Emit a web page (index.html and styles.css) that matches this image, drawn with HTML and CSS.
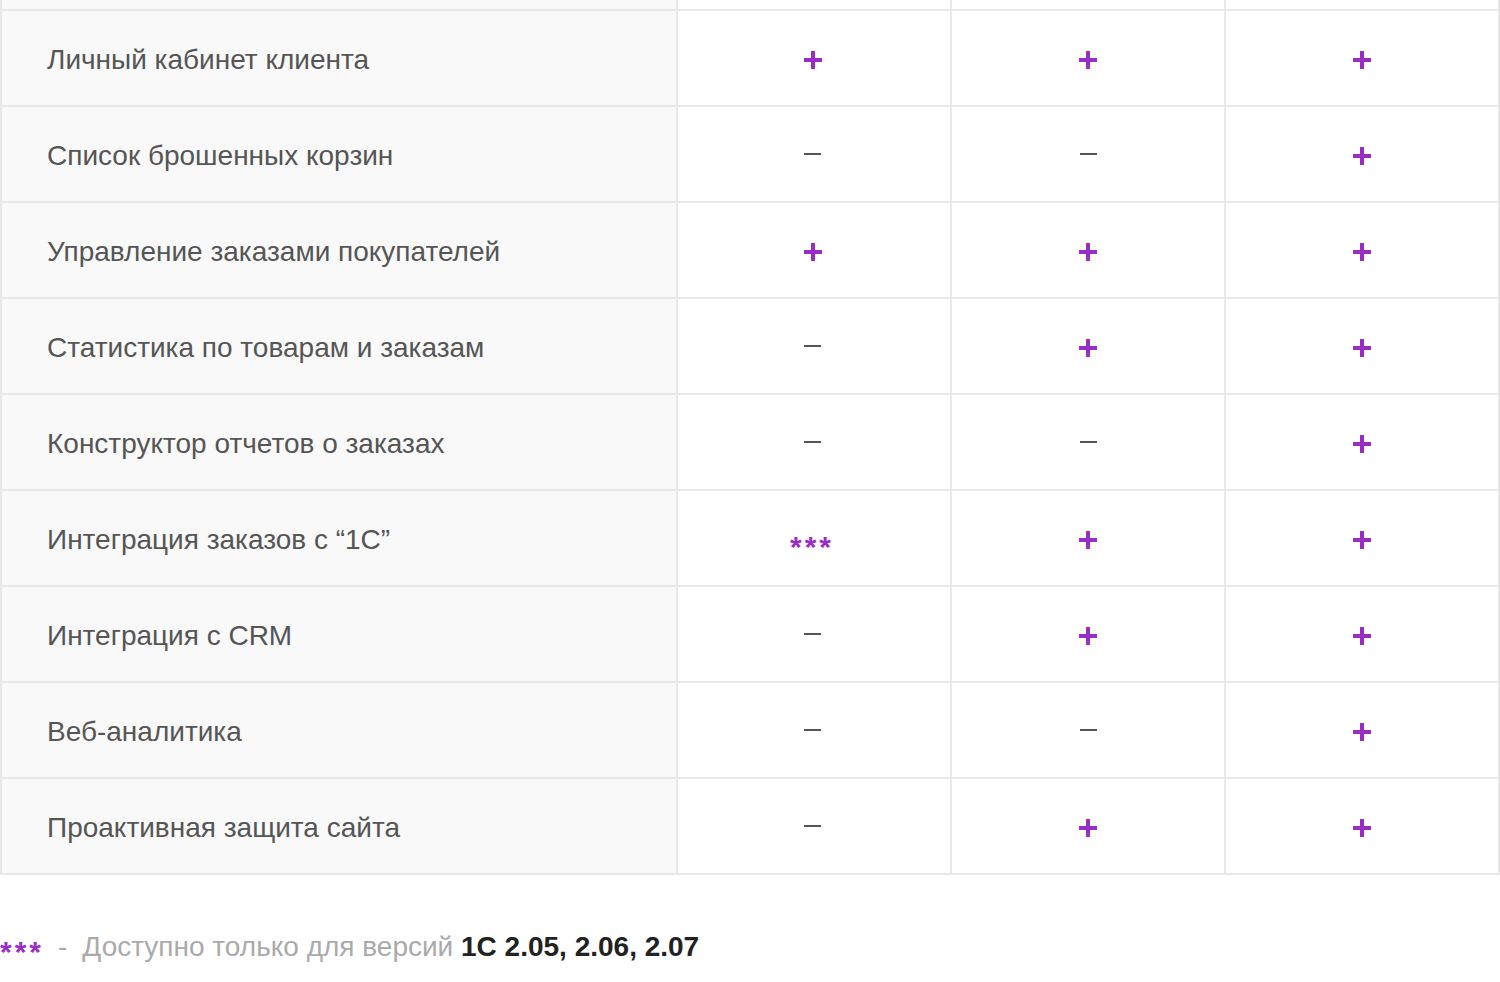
FILE: index.html
```html
<!DOCTYPE html>
<html lang="ru">
<head>
<meta charset="utf-8">
<title>Сравнение редакций</title>
<link rel="stylesheet" href="styles.css">
</head>
<body>
<div class="table">
  <div class="cell name top"></div><div class="cell val top"></div><div class="cell val top"></div><div class="cell val top"></div>

  <div class="cell name">Личный кабинет клиента</div>
  <div class="cell val first"><span class="plus"></span></div>
  <div class="cell val"><span class="plus"></span></div>
  <div class="cell val"><span class="plus"></span></div>

  <div class="cell name">Список брошенных корзин</div>
  <div class="cell val first"><span class="minus"></span></div>
  <div class="cell val"><span class="minus"></span></div>
  <div class="cell val"><span class="plus"></span></div>

  <div class="cell name">Управление заказами покупателей</div>
  <div class="cell val first"><span class="plus"></span></div>
  <div class="cell val"><span class="plus"></span></div>
  <div class="cell val"><span class="plus"></span></div>

  <div class="cell name">Статистика по товарам и заказам</div>
  <div class="cell val first"><span class="minus"></span></div>
  <div class="cell val"><span class="plus"></span></div>
  <div class="cell val"><span class="plus"></span></div>

  <div class="cell name">Конструктор отчетов о заказах</div>
  <div class="cell val first"><span class="minus"></span></div>
  <div class="cell val"><span class="minus"></span></div>
  <div class="cell val"><span class="plus"></span></div>

  <div class="cell name">Интеграция заказов с “1С”</div>
  <div class="cell val first"><span class="stars">***</span></div>
  <div class="cell val"><span class="plus"></span></div>
  <div class="cell val"><span class="plus"></span></div>

  <div class="cell name">Интеграция с CRM</div>
  <div class="cell val first"><span class="minus"></span></div>
  <div class="cell val"><span class="plus"></span></div>
  <div class="cell val"><span class="plus"></span></div>

  <div class="cell name">Веб-аналитика</div>
  <div class="cell val first"><span class="minus"></span></div>
  <div class="cell val"><span class="minus"></span></div>
  <div class="cell val"><span class="plus"></span></div>

  <div class="cell name">Проактивная защита сайта</div>
  <div class="cell val first"><span class="minus"></span></div>
  <div class="cell val"><span class="plus"></span></div>
  <div class="cell val"><span class="plus"></span></div>
</div>
<p class="note"><span class="note-stars">***</span><span class="note-dash">-</span>Доступно только для версий <b>1С 2.05, 2.06, 2.07</b></p>
</body>
</html>
```
FILE: styles.css
```css
* { box-sizing: border-box; }
html, body { margin: 0; padding: 0; background: #fff; }
body {
  font-family: "Liberation Sans", Arial, sans-serif;
  color: #555;
  font-size: 28px;
}
.table {
  display: grid;
  grid-template-columns: 676px 274px 274px 274px;
  border-left: 2px solid #e8e8e8;
  width: 1500px;
}
.cell {
  height: 96px;
  border-right: 2px solid #e8e8e8;
  border-bottom: 2px solid #e8e8e8;
  display: flex;
  align-items: center;
  background: #fff;
}
.cell.top { height: 11px; padding: 0; }
.name {
  background: #f9f9f9;
  padding-left: 45px;
  padding-top: 4px;
  color: #555;
}
.val { justify-content: center; }
.val.first { padding-right: 3px; }
.plus {
  position: relative;
  width: 18px;
  height: 18px;
  display: block;
  margin-top: 4px;
}
.plus::before, .plus::after {
  content: "";
  position: absolute;
  background: #9a2cc8;
}
.plus::before { left: 0; right: 0; top: 7px; height: 4px; }
.plus::after { top: 0; bottom: 0; left: 7px; width: 4px; }
.minus {
  display: block;
  width: 17px;
  height: 2px;
  background: #555;
}
.stars {
  color: #9a2cc8;
  font-weight: bold;
  font-size: 30px;
  letter-spacing: 3px;
  margin-top: 18px;
  margin-right: 1px;
}
.note {
  margin: 56px 0 0 0;
  color: #aaa;
  font-size: 28px;
  line-height: 32px;
}
.note-stars {
  color: #9a2cc8;
  font-weight: bold;
  font-size: 30px;
  letter-spacing: 3px;
  vertical-align: -6px;
}
.note-dash { margin: 0 15px 0 14px; }
.note b { color: #222; }
```
